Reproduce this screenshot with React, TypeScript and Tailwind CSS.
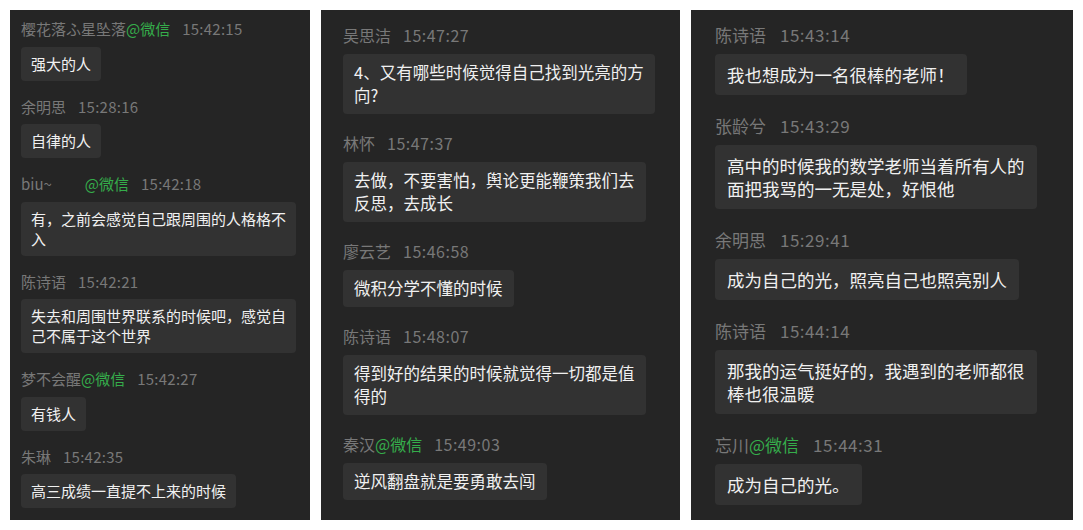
import React from 'react';

type Msg = {
  name: string;
  wx?: boolean; // 来自微信
  gap?: boolean; // 名字后面的空白
  time: string;
  lines: string[];
};

type Sizing = {
  panel: string;
  head: string;
  time: string;
  bubble: string;
  item: string;
  spacer: string;
};

const left: Msg[] = [
  { name: '樱花落ふ星坠落', wx: true, time: '15:42:15', lines: ['强大的人'] },
  { name: '余明思', time: '15:28:16', lines: ['自律的人'] },
  { name: 'biu~', wx: true, gap: true, time: '15:42:18', lines: ['有，之前会感觉自己跟周围的人格格不', '入'] },
  { name: '陈诗语', time: '15:42:21', lines: ['失去和周围世界联系的时候吧，感觉自', '己不属于这个世界'] },
  { name: '梦不会醒', wx: true, time: '15:42:27', lines: ['有钱人'] },
  { name: '朱琳', time: '15:42:35', lines: ['高三成绩一直提不上来的时候'] },
];

const middle: Msg[] = [
  { name: '吴思洁', time: '15:47:27', lines: ['4、又有哪些时候觉得自己找到光亮的方', '向?'] },
  { name: '林怀', time: '15:47:37', lines: ['去做，不要害怕，舆论更能鞭策我们去', '反思，去成长'] },
  { name: '廖云艺', time: '15:46:58', lines: ['微积分学不懂的时候'] },
  { name: '陈诗语', time: '15:48:07', lines: ['得到好的结果的时候就觉得一切都是值', '得的'] },
  { name: '秦汉', wx: true, time: '15:49:03', lines: ['逆风翻盘就是要勇敢去闯'] },
];

const right: Msg[] = [
  { name: '陈诗语', time: '15:43:14', lines: ['我也想成为一名很棒的老师！'] },
  { name: '张龄兮', time: '15:43:29', lines: ['高中的时候我的数学老师当着所有人的', '面把我骂的一无是处，好恨他'] },
  { name: '余明思', time: '15:29:41', lines: ['成为自己的光，照亮自己也照亮别人'] },
  { name: '陈诗语', time: '15:44:14', lines: ['那我的运气挺好的，我遇到的老师都很', '棒也很温暖'] },
  { name: '忘川', wx: true, time: '15:44:31', lines: ['成为自己的光。'] },
];

const small: Sizing = {
  panel: 'w-[300px] pl-[11px] pt-[9px] text-[15px]',
  head: 'leading-[20px]',
  time: 'ml-3 tracking-[0.25px]',
  bubble: 'mt-[7.5px] px-[10px] py-[7px] leading-[20px]',
  item: 'mb-[16px]',
  spacer: 'w-[33px]',
};

const medium: Sizing = {
  panel: 'w-[359px] pl-[22px] pt-[13.5px] text-[16px]',
  head: 'leading-[23px]',
  time: 'ml-3 tracking-[0.5px]',
  bubble: 'mt-[7.5px] px-[11px] py-[7px] text-[16.5px] leading-[23px]',
  item: 'mb-[17.5px]',
  spacer: 'w-[33px]',
};

const large: Sizing = {
  panel: 'w-[382px] pl-[24px] pt-[13px] text-[17px]',
  head: 'leading-[24px]',
  time: 'ml-[14px] tracking-[0.5px]',
  bubble: 'mt-[7px] px-[12px] py-[9px] text-[17.5px] leading-[23px]',
  item: 'mb-[19px]',
  spacer: 'w-[33px]',
};

const Message = ({ m, s }: { m: Msg; s: Sizing }) => (
  <div className={s.item}>
    <div className={`flex items-center whitespace-nowrap text-[#787878] ${s.head}`}>
      <span>{m.name}</span>
      {m.gap && <span className={`inline-block ${s.spacer}`} />}
      {m.wx && <span className="text-[#35ad4b]">@微信</span>}
      <span className={s.time}>{m.time}</span>
    </div>
    <div className={`w-fit rounded-[4px] bg-[#323232] text-[#f0f0f0] ${s.bubble}`}>
      {m.lines.map((l, i) => (
        <div key={i} className="whitespace-nowrap">
          {l}
        </div>
      ))}
    </div>
  </div>
);

const Panel = ({ items, s }: { items: Msg[]; s: Sizing }) => (
  <div className={`h-[510px] shrink-0 overflow-hidden bg-[#252525] ${s.panel}`}>
    {items.map((m, i) => (
      <Message key={i} m={m} s={s} />
    ))}
  </div>
);

export default function App() {
  return (
    <div
      className="flex h-[530px] w-[1083px] gap-[11px] bg-white pl-[10px] pt-[10px]"
      style={{ fontFamily: '"Noto Sans CJK SC", "Noto Sans", sans-serif' }}
    >
      <Panel items={left} s={small} />
      <Panel items={middle} s={medium} />
      <Panel items={right} s={large} />
    </div>
  );
}
